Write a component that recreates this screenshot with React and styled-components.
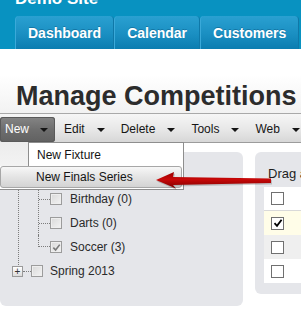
import React from "react";
import styled, { createGlobalStyle } from "styled-components";

const GlobalStyle = createGlobalStyle`
  html, body {
    margin: 0;
    padding: 0;
    overflow: hidden;
    background: #ffffff;
  }
  body {
    font-family: "Liberation Sans", Arial, sans-serif;
  }
`;

const Page = styled.div`
  position: relative;
  width: 301px;
  height: 311px;
  overflow: hidden;
`;

const Header = styled.header`
  height: 49px;
  background: #0892c1;
  padding-left: 15px;
  overflow: hidden;
  box-sizing: border-box;
`;

const SiteName = styled.div`
  margin-top: -11px;
  font-size: 17px;
  font-weight: bold;
  line-height: 20px;
  color: #ffffff;
`;

const Tabs = styled.nav`
  display: flex;
  margin-top: 7px;
`;

const Tab = styled.div`
  padding: 0 12px;
  height: 33px;
  line-height: 34px;
  font-size: 14px;
  font-weight: bold;
  color: #ffffff;
  white-space: nowrap;
  border-radius: 4px 4px 0 0;
  border-left: 1px solid #3aa9d9;
  border-right: 1px solid #0f78a8;
  background: linear-gradient(#2aa0d1, #1a8fc2 55%, #0b7db0);
  text-shadow: 0 -1px 0 rgba(0, 60, 100, 0.35);
`;

const TitleBar = styled.div`
  height: 65px;
  padding: 32px 0 0 16px;
  box-sizing: border-box;
  background: linear-gradient(#ffffff, #ffffff 40%, #f2f2f2);
  border-bottom: 1px solid #a9a9a9;
`;

const Heading = styled.h1`
  margin: 0;
  font-size: 27px;
  line-height: 30px;
  font-weight: bold;
  color: #2c2c2c;
  white-space: nowrap;
`;

const Toolbar = styled.div`
  position: relative;
  display: flex;
  height: 25px;
  padding-top: 3px;
  background: linear-gradient(#f6f6f6, #e6e6e6 60%, #d7d7d7);
  border-bottom: 1px solid #9c9c9c;
  z-index: 4;
`;

const ToolItem = styled.div`
  display: flex;
  align-items: center;
  gap: ${(p) => (p.active ? "11px" : "12px")};
  height: 25px;
  padding: ${(p) => (p.active ? "0 8px 0 5px" : "0 7px 0 9px")};
  width: ${(p) => (p.active ? "55px" : "auto")};
  box-sizing: border-box;
  font-size: 12px;
  line-height: 25px;
  color: ${(p) => (p.active ? "#ffffff" : "#151515")};
  white-space: nowrap;
  border-radius: 3px;
  background: ${(p) =>
    p.active ? "linear-gradient(#858585, #6e6e6e 50%, #616161)" : "transparent"};
  box-shadow: ${(p) => (p.active ? "inset 0 0 0 1px #5a5a5a" : "none")};
`;

const Caret = styled.span`
  width: 0;
  height: 0;
  border-left: 4px solid transparent;
  border-right: 4px solid transparent;
  border-top: 4px solid #141414;
`;

const Menu = styled.div`
  position: absolute;
  left: 0;
  top: 100%;
  width: 184px;
  font-size: 12px;
  color: #141414;
`;

const MenuRow = styled.div`
  display: flex;
  height: 24px;
`;

const MenuGutter = styled.div`
  width: 28px;
  background: linear-gradient(#ececec, #f3f3f3);
`;

const MenuItem = styled.div`
  flex: 1;
  padding-left: 8px;
  line-height: 24px;
  background: #ffffff;
  border: 1px solid #8e8e8e;
  border-bottom: none;
`;

const MenuFoot = styled.div`
  padding: 0 1px 1px 0;
  background: #ffffff;
  border-right: 1px solid #8e8e8e;
  border-bottom: 1px solid #8e8e8e;
`;

const MenuItemHot = styled.div`
  height: 20px;
  padding-left: 35px;
  line-height: 20px;
  border: 1px solid #a7a7a7;
  border-radius: 3px;
  background: linear-gradient(#f7f7f7, #e4e4e4 50%, #d3d3d3);
`;

const Content = styled.div`
  display: flex;
  gap: 12px;
  padding-top: 9px;
`;

const LeftPanel = styled.div`
  flex: none;
  width: 243px;
  height: 154px;
  background: #e5e6ea;
  border-radius: 6px;
  font-size: 12px;
  color: #2a2a2a;
`;

const Outer = styled.div`
  margin-left: 18px;
  padding-bottom: 6px;
  border-left: 1px dotted #7c7c7c;
`;

const Inner = styled.div`
  margin-left: 19px;
`;

const InnerLines = styled.div`
  padding-top: 35px;
  border-left: 1px dotted #7c7c7c;
`;

const TreeRow = styled.div`
  display: flex;
  align-items: center;
  height: 24px;
  margin-left: ${(p) => p.indent || 0}px;
  margin-top: ${(p) => p.pull || 0}px;
  white-space: nowrap;
`;

const Connector = styled.span`
  width: ${(p) => p.size}px;
  border-top: 1px dotted #7c7c7c;
`;

const Elbow = styled.span`
  align-self: flex-start;
  width: 11px;
  height: 11px;
  border-left: 1px dotted #7c7c7c;
  border-bottom: 1px dotted #7c7c7c;
`;

const TreeBox = styled.span`
  display: flex;
  align-items: center;
  justify-content: center;
  width: 12px;
  height: 12px;
  margin-right: ${(p) => p.gap}px;
  box-sizing: border-box;
  border: 1px solid #9c9c9c;
  background: linear-gradient(135deg, #d9d9d9, #f3f3f3);
  box-shadow: inset 0 0 0 1px #eeeeee;
`;

const Expander = styled.span`
  display: flex;
  align-items: center;
  justify-content: center;
  width: 11px;
  height: 11px;
  box-sizing: border-box;
  border: 1px solid #9a9a9a;
  background: linear-gradient(#ffffff, #dcdcdc);
  font-size: 10px;
  line-height: 9px;
  color: #333333;
`;

const RightPanel = styled.div`
  flex: none;
  width: 120px;
  height: 142px;
  padding: 0 0 11px 9px;
  box-sizing: border-box;
  background: #e5e6ea;
  border-radius: 6px;
`;

const Hint = styled.div`
  height: 35px;
  padding: 14px 0 0 4px;
  box-sizing: border-box;
  font-size: 13px;
  line-height: 15px;
  color: #1e1e1e;
  white-space: nowrap;
`;

const Table = styled.div`
  background: #ffffff;
`;

const TableRow = styled.div`
  display: flex;
  align-items: center;
  height: 24px;
  padding-left: 7px;
  box-sizing: border-box;
  background: ${(p) => p.bg || "#ffffff"};
  border-bottom: ${(p) => (p.line ? "1px solid #d9d9d9" : "none")};
`;

const Check = styled.span`
  display: flex;
  align-items: center;
  justify-content: center;
  width: 13px;
  height: 13px;
  box-sizing: border-box;
  border: 1px solid #707070;
  background: #ffffff;
`;

const Pointer = styled.svg`
  position: absolute;
  left: 150px;
  top: 166px;
  z-index: 6;
`;

function Tick({ color, size }) {
  return (
    <svg width={size} height={size} viewBox="0 0 10 10">
      <path d="M1.5 5.2 L4 7.8 L8.6 1.8" fill="none" stroke={color} strokeWidth="1.8" />
    </svg>
  );
}

const tools = ["Edit", "Delete", "Tools", "Web"];

export default function App() {
  return (
    <Page>
      <GlobalStyle />
      <Header>
        <SiteName>Demo Site</SiteName>
        <Tabs>
          <Tab>Dashboard</Tab>
          <Tab>Calendar</Tab>
          <Tab>Customers</Tab>
        </Tabs>
      </Header>
      <TitleBar>
        <Heading>Manage Competitions</Heading>
      </TitleBar>
      <Toolbar>
        <ToolItem active>
          New <Caret />
        </ToolItem>
        {tools.map((t) => (
          <ToolItem key={t}>
            {t} <Caret />
          </ToolItem>
        ))}
        <Menu>
          <MenuRow>
            <MenuGutter />
            <MenuItem>New Fixture</MenuItem>
          </MenuRow>
          <MenuFoot>
            <MenuItemHot>New Finals Series</MenuItemHot>
          </MenuFoot>
        </Menu>
      </Toolbar>
      <Content>
        <LeftPanel>
          <Outer>
            <Inner>
              <InnerLines>
                <TreeRow>
                  <Connector size={11} />
                  <TreeBox gap={8} />
                  Birthday (0)
                </TreeRow>
                <TreeRow>
                  <Connector size={11} />
                  <TreeBox gap={8} />
                  Darts (0)
                </TreeRow>
              </InnerLines>
              <TreeRow>
                <Elbow />
                <TreeBox gap={8}>
                  <Tick color="#7a7a7a" size={9} />
                </TreeBox>
                Soccer (3)
              </TreeRow>
            </Inner>
          </Outer>
          <TreeRow indent={12} pull={-6}>
            <Expander>+</Expander>
            <Connector size={8} />
            <TreeBox gap={7} />
            Spring 2013
          </TreeRow>
        </LeftPanel>
        <RightPanel>
          <Hint>Drag and drop to reorder</Hint>
          <Table>
            <TableRow line>
              <Check />
            </TableRow>
            <TableRow bg="#fffde8">
              <Check>
                <Tick color="#000000" size={10} />
              </Check>
            </TableRow>
            <TableRow bg="#efefef">
              <Check />
            </TableRow>
            <TableRow>
              <Check />
            </TableRow>
          </Table>
        </RightPanel>
      </Content>
      <Pointer width="125" height="26" viewBox="150 166 125 26">
        <defs>
          <linearGradient id="redFill" x1="0" y1="0" x2="0" y2="1">
            <stop offset="0" stopColor="#9a0000" />
            <stop offset="0.45" stopColor="#c80808" />
            <stop offset="1" stopColor="#7c0000" />
          </linearGradient>
        </defs>
        <path
          d="M156 180 L174 172 L173 177 L271 178.5 L271 183 L173 185 L176 188.5 Z"
          fill="rgba(0,0,0,0.18)"
          transform="translate(1 1.5)"
        />
        <path
          d="M156 180 L174 172 L173 177 L271 178.5 L271 183 L173 185 L176 188.5 Z"
          fill="url(#redFill)"
        />
      </Pointer>
    </Page>
  );
}
